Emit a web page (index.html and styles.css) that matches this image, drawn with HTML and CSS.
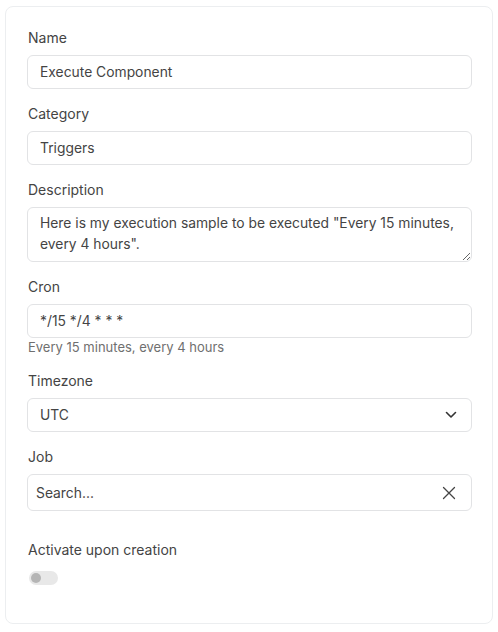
FILE: index.html
```html
<!DOCTYPE html>
<html lang="en">
<head>
<meta charset="utf-8">
<title>Form</title>
<link rel="stylesheet" href="styles.css">
</head>
<body>
<div class="card">
  <div class="group">
    <label class="label">Name</label>
    <input class="input" type="text" value="Execute Component">
  </div>
  <div class="group">
    <label class="label">Category</label>
    <input class="input" type="text" value="Triggers">
  </div>
  <div class="group">
    <label class="label">Description</label>
    <textarea class="textarea">Here is my execution sample to be executed "Every 15 minutes, every 4 hours".</textarea>
  </div>
  <div class="group group-cron">
    <label class="label">Cron</label>
    <input class="input" type="text" value="*/15 */4 * * *">
    <div class="hint">Every 15 minutes, every 4 hours</div>
  </div>
  <div class="group">
    <label class="label">Timezone</label>
    <div class="select">
      <span>UTC</span>
      <svg class="chev" width="12" height="8" viewBox="0 0 12 8"><path d="M1.5 1.5 L6 6 L10.5 1.5" fill="none" stroke="#333" stroke-width="1.6" stroke-linecap="round" stroke-linejoin="round"/></svg>
    </div>
  </div>
  <div class="group group-job">
    <label class="label">Job</label>
    <div class="search">
      <span class="placeholder">Search...</span>
      <svg class="close" width="14" height="14" viewBox="0 0 14 14"><path d="M1.5 1.5 L12.5 12.5 M12.5 1.5 L1.5 12.5" fill="none" stroke="#444" stroke-width="1.3" stroke-linecap="round"/></svg>
    </div>
  </div>
  <div class="group group-last">
    <label class="label">Activate upon creation</label>
    <div class="toggle"><span class="knob"></span></div>
  </div>
</div>
</body>
</html>
```
FILE: styles.css
```css
* { box-sizing: border-box; }
html, body { margin: 0; padding: 0; background: #ffffff; }
body {
  font-family: Inter, "Open Sans", "Liberation Sans", sans-serif;
  font-size: 14px;
  color: #444444;
  padding: 6px 5px 0 5px;
}
.card {
  width: 488px;
  border: 1px solid #eceef0;
  border-radius: 8px;
  padding: 21px 20px 0 21px;
  background: #fff;
}
.group {
  display: flex;
  flex-direction: column;
  margin-bottom: 15px;
}
.group-cron { margin-bottom: 16px; }
.label {
  display: block;
  line-height: 20px;
  height: 20px;
  margin-bottom: 7px;
  color: #444444;
  padding-left: 1px;
}
.input, .textarea, .select, .search {
  width: 100%;
  border: 1px solid #e2e3e5;
  border-radius: 6px;
  font-family: inherit;
  font-size: 13.85px;
  color: #444444;
  background: #fff;
  outline: none;
}
.input {
  height: 34px;
  padding: 0 12px;
}
.textarea {
  height: 55px;
  padding: 5px 12px;
  line-height: 21px;
  resize: vertical;
  display: block;
}
.hint {
  margin-top: 1px;
  font-size: 13px;
  line-height: 16px;
  color: #6f6f6f;
  padding-left: 1px;
}
.select {
  height: 34px;
  display: flex;
  align-items: center;
  justify-content: space-between;
  padding: 0 14px 0 12px;
}
.chev { display: block; }
.search {
  height: 37px;
  display: flex;
  align-items: center;
  justify-content: space-between;
  padding: 0 15px 0 8px;
}
.placeholder { color: #444444; }
.close { display: block; }
.group-job { margin-bottom: 29px; }
.label + .toggle { margin-top: 4px; }
.group-last { margin-bottom: 0; padding-bottom: 38px; }
.toggle {
  width: 29px;
  height: 14px;
  border-radius: 7px;
  background: #e8e8e8;
  position: relative;
  margin-left: 2px;
}
.knob {
  position: absolute;
  left: 2px;
  top: 2px;
  width: 10px;
  height: 10px;
  border-radius: 50%;
  background: #b5b5b5;
}
```
